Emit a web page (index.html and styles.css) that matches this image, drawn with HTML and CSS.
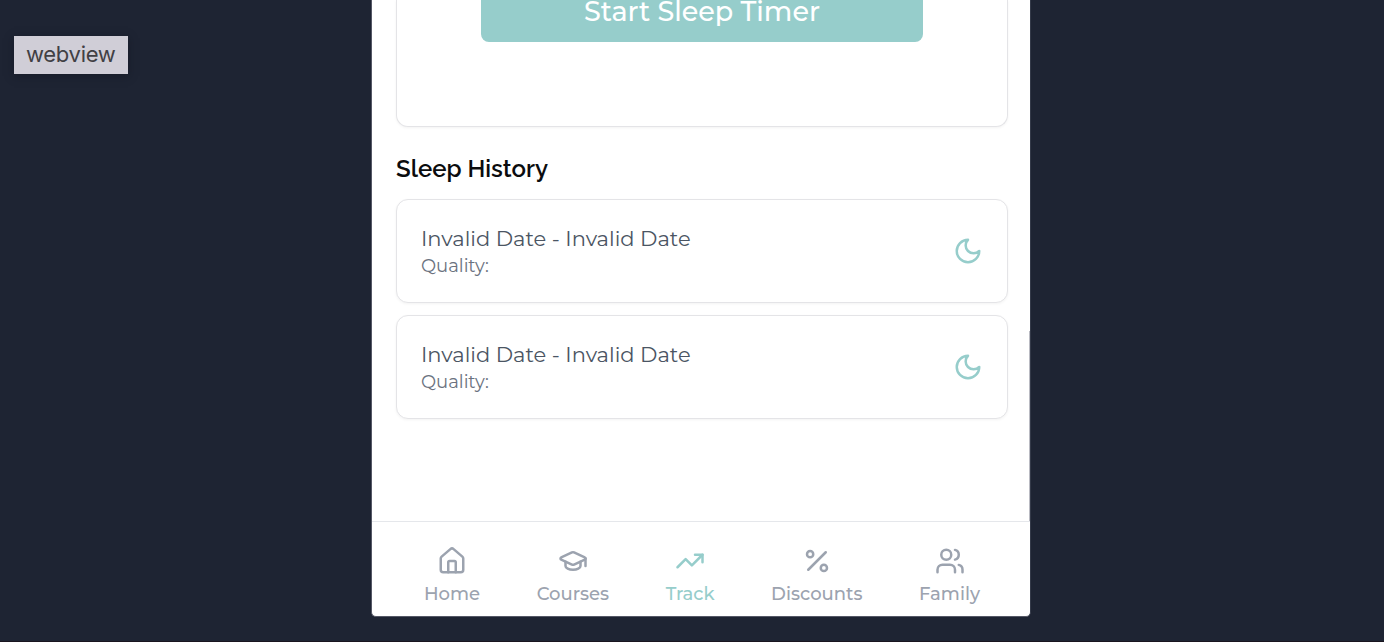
FILE: index.html
```
<!DOCTYPE html>
<html lang="en">
<head>
<meta charset="utf-8">
<title>Sleep</title>
<link rel="stylesheet" href="styles.css">
</head>
<body>
<svg class="defs" aria-hidden="true">
  <symbol id="moon" viewBox="0 0 24 24"><path d="M12 3a6 6 0 0 0 9 9 9 9 0 1 1-9-9Z"/></symbol>
</svg>
<div class="tooltip">webview</div>
<main class="phone">
  <div class="content">
    <section class="card timer"><button class="start"><span>Start Sleep Timer</span></button></section>
    <h2 class="heading"><span>Sleep History</span></h2>
    <section class="card entry">
      <div><p class="date">Invalid Date - Invalid Date</p><p class="quality">Quality:</p></div>
      <svg class="icon moon"><use href="#moon"/></svg>
    </section>
    <section class="card entry">
      <div><p class="date">Invalid Date - Invalid Date</p><p class="quality">Quality:</p></div>
      <svg class="icon moon"><use href="#moon"/></svg>
    </section>
    <div class="scrollbar"></div>
  </div>
  <nav class="nav">
    <a class="item home"><svg class="icon" viewBox="0 0 24 24"><path d="M15 21v-8a1 1 0 0 0-1-1h-4a1 1 0 0 0-1 1v8"/><path d="M3 10a2 2 0 0 1 .709-1.528l7-5.999a2 2 0 0 1 2.582 0l7 5.999A2 2 0 0 1 21 10v9a2 2 0 0 1-2 2H5a2 2 0 0 1-2-2z"/></svg><span>Home</span></a>
    <a class="item courses"><svg class="icon" viewBox="0 0 24 24"><path d="M21.42 10.922a1 1 0 0 0-.019-1.838L12.83 5.18a2 2 0 0 0-1.66 0L2.6 9.08a1 1 0 0 0 0 1.832l8.57 3.908a2 2 0 0 0 1.66 0z"/><path d="M22 10v6"/><path d="M6 12.5V16a6 3 0 0 0 12 0v-3.5"/></svg><span>Courses</span></a>
    <a class="item track"><svg class="icon" viewBox="0 0 24 24"><path d="m22 7-8.500 8.500-5-5L2 17"/><path d="M16 7h6v6"/></svg><span>Track</span></a>
    <a class="item discounts"><svg class="icon" viewBox="0 0 24 24"><path d="M19 5 5 19"/><circle cx="6.500" cy="6.500" r="2.500"/><circle cx="17.500" cy="17.500" r="2.500"/></svg><span>Discounts</span></a>
    <a class="item family"><svg class="icon" viewBox="0 0 24 24"><path d="M16 21v-2a4 4 0 0 0-4-4H6a4 4 0 0 0-4 4v2"/><circle cx="9" cy="7" r="4"/><path d="M22 21v-2a4 4 0 0 0-3-3.870"/><path d="M16 3.130a4 4 0 0 1 0 7.750"/></svg><span>Family</span></a>
  </nav>
</main>
</body>
</html>
```
FILE: styles.css
```
* { box-sizing: border-box; margin: 0; }
body { width: 1384px; height: 642px; overflow: hidden; background: #1e2433; border-bottom: 1px solid #19151f; font-family: Montserrat, "Open Sans", sans-serif; }
.defs { position: absolute; width: 0; height: 0; }
.tooltip { position: absolute; left: 14px; top: 36px; width: 114px; height: 38px; padding-left: 12px; background: #d0ced7; color: #414044; font: 22px/37px Inter, sans-serif; letter-spacing: -.3px; box-shadow: 0 2px 8px #10131d80; }
.phone { width: 660px; height: 617px; margin-left: 371px; display: flex; flex-direction: column; background: #fff; border: 1px solid #555866; border-top: 0; border-right-color: #343a49; border-radius: 0 0 5px 5px; overflow: hidden; }
.content { position: relative; height: 521px; padding: 0 22px 0 24px; }
.scrollbar { position: absolute; right: 0; top: 331px; width: 1px; height: 190px; background: #b9bac2; }
.card { width: 612px; border: 1px solid #e4e4e7; border-radius: 12px; background: #fff; box-shadow: 0 1px 3px #0000000d; }
.timer { height: 127px; border-top: 0; border-radius: 0 0 12px 12px; display: flex; justify-content: center; align-items: flex-start; }
.start { width: 442px; height: 42px; padding: 0 0 19px; border: 0; border-radius: 0 0 8px 8px; background: #96cdcb; color: #fff; font: 500 27px/23px Montserrat, "Open Sans", sans-serif; white-space: nowrap; }
.heading { height: 72px; padding-top: 26px; color: #0b0c0e; font: 600 24px/32px Raleway, Lato, sans-serif; }
.entry { height: 104px; margin-bottom: 12px; padding: 0 24px; display: flex; align-items: center; justify-content: space-between; }
.date { color: #4b5563; font-size: 21px; line-height: 30px; font-weight: 400; white-space: nowrap; }
.quality { color: #6b7280; font-size: 18px; line-height: 24px; font-weight: 400; }
.icon { display: block; width: 30px; height: 30px; fill: none; stroke: currentColor; stroke-width: 2; stroke-linecap: round; stroke-linejoin: round; }
.moon { color: #96cdcb; }
.nav { height: 95px; border-top: 1px solid #e5e7eb; display: flex; justify-content: space-between; padding: 24px 50px 0 52px; color: #9ca3af; }
.item { display: flex; flex-direction: column; align-items: center; font-size: 18px; line-height: 26px; font-weight: 500; white-space: nowrap; }
.item span { margin-top: 5px; }
.track { color: #96cdcb; }
```
